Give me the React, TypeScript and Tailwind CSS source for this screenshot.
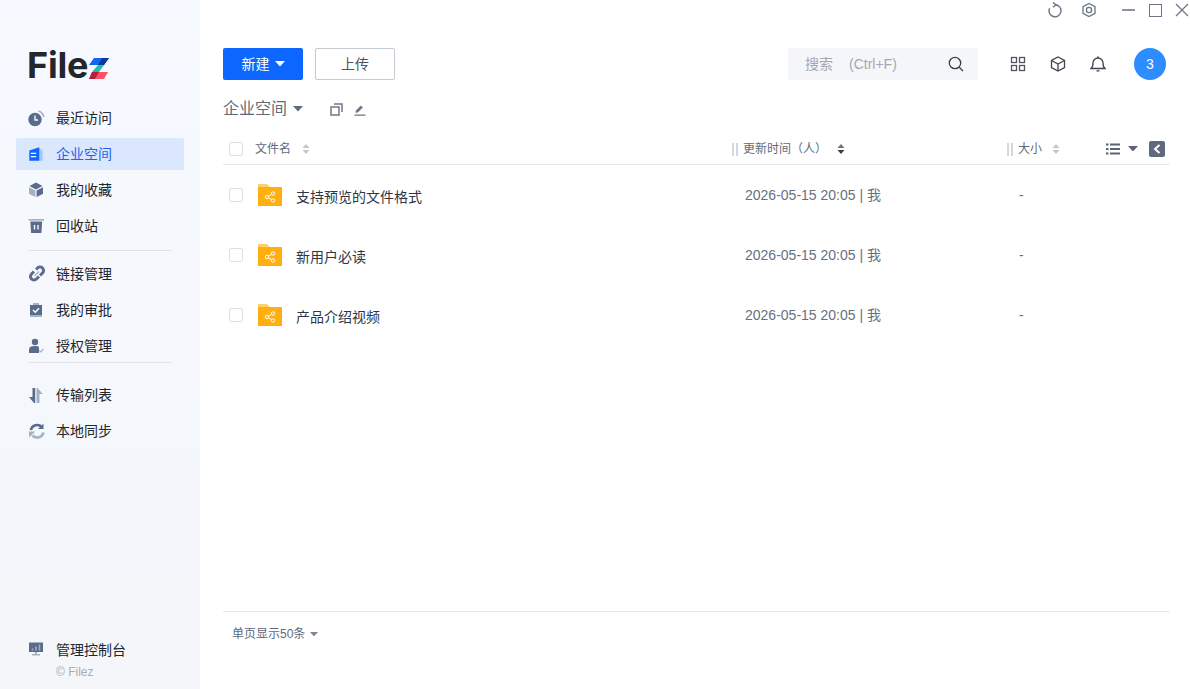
import type { ReactNode } from 'react';

const FONT = "font-['Liberation_Sans','Noto_Sans_CJK_SC',sans-serif]";

function Logo() {
  return (
    <div className="flex items-end h-[30px] pl-[27px]">
      <span className="font-['Inter',sans-serif] font-bold text-[36px] leading-[30px] tracking-[-0.2px] text-[#23262b]">File</span>
      <svg width="20" height="21" viewBox="0 0 20 21" className="ml-[1px] mb-[1px]">
        <polygon points="5,0 20,0 15,7 0,7" fill="#1166f5" />
        <polygon points="13,0 20,0 15,7 9,7" fill="#0d3a9a" />
        <polygon points="9,7 15,7 10,14 3,14" fill="#22bfa6" />
        <polygon points="3,14 19,14 15,21 0,21" fill="#ff5263" />
        <polygon points="3,14 10,14 6,21 0,21" fill="#b5203f" />
      </svg>
    </div>
  );
}

const dark = '#5a6c8c';
const light = '#a3b1c4';

const navIcons: Record<string, ReactNode> = {
  recent: (
    <svg width="18" height="18" viewBox="0 0 18 18">
      <circle cx="7" cy="10.500" r="6.700" fill={dark} />
      <path d="M7 6.500v4.500h3" fill="none" stroke="#fff" strokeWidth="1.300" />
      <path d="M10.500 2a7.500 7.500 0 0 1 5.300 6" fill="none" stroke={light} strokeWidth="1.600" />
    </svg>
  ),
  space: (
    <svg width="18" height="18" viewBox="0 0 18 18">
      <path d="M11.300 3.500l3.400 2v10.200h-3.400z" fill="#a9c6fa" />
      <path d="M1.300 5.500l10-3.200v13.400h-10z" fill="#0d66ff" />
      <path d="M2.800 8.300h5.400M2.800 11.700h5.400" stroke="#fff" strokeWidth="1.300" />
    </svg>
  ),
  fav: (
    <svg width="18" height="18" viewBox="0 0 18 18">
      <path d="M8 1.500l6.500 3.500L8 8.500 1.500 5z" fill={dark} />
      <path d="M1 6.200l6.400 3.400V16L1 12.800z" fill={light} />
      <path d="M15 6.200L8.600 9.600V16l6.400-3.200z" fill={dark} />
    </svg>
  ),
  trash: (
    <svg width="18" height="18" viewBox="0 0 18 18">
      <path d="M.5 2h15.500v1.600H.5z" fill={light} />
      <path d="M2.300 4.500h11.900l-.8 11.500H3.100z" fill={dark} />
      <path d="M6.500 8v4.500M10 8v4.500" stroke="#fff" strokeWidth="1.300" />
    </svg>
  ),
  link: (
    <svg width="18" height="18" viewBox="0 0 18 18" fill="none" strokeWidth="3">
      <path d="M6 6.500L3.500 9a3.500 3.500 0 0 0 5 5l2.500-2.500" stroke={dark} />
      <path d="M8 4.500l1.500-1.500a3.500 3.500 0 0 1 5 5L12 10.500" stroke={dark} />
      <path d="M6.500 11L11 6.500" stroke={light} strokeWidth="1.500" />
    </svg>
  ),
  approve: (
    <svg width="18" height="18" viewBox="0 0 18 18">
      <path d="M5 2h6v2H5z" fill={light} />
      <path d="M2 4h12v10.500H2z" fill={dark} />
      <path d="M2 14.500h12V16H2z" fill={light} />
      <path d="M5 9l2.300 2.300 3.700-4" fill="none" stroke="#fff" strokeWidth="1.400" />
    </svg>
  ),
  auth: (
    <svg width="18" height="18" viewBox="0 0 18 18">
      <circle cx="7" cy="5" r="3.200" fill={dark} />
      <path d="M1 16v-3.500C1 10 3 9 7 9s4 .8 4 2.500V16z" fill={dark} />
      <path d="M11.300 13.500l1.500 1.500 2.700-3" fill="none" stroke={light} strokeWidth="1.200" />
    </svg>
  ),
  transfer: (
    <svg width="18" height="18" viewBox="0 0 18 18">
      <path d="M4.500 2h2.700v15H6L1 11h3.500z" fill={dark} />
      <path d="M8.500 2h1.200l5 6h-3.200v9H8.500z" fill={light} />
    </svg>
  ),
  sync: (
    <svg width="18" height="18" viewBox="0 0 18 18" fill="none" strokeWidth="2.600">
      <path d="M2.800 8a6.500 6.500 0 0 1 11-3" stroke={dark} />
      <path d="M15.500 1.500v5.500H10z" fill={dark} />
      <path d="M15.500 10.500a6.500 6.500 0 0 1-11 3" stroke={light} />
      <path d="M1 9.500h6.300L1 15.500z" fill={light} />
    </svg>
  ),
  console: (
    <svg width="18" height="18" viewBox="0 0 18 18">
      <path d="M1 1.500h14V11H1z" fill={dark} />
      <path d="M4.500 7.500V9.500M8 5.500v4M11.500 3.500v6" stroke={light} strokeWidth="1.500" />
      <path d="M7 11h2v2H7zM4 13h8v1.500H4z" fill={light} />
    </svg>
  ),
};

function NavItem({ icon, label, active }: { icon: string; label: string; active?: boolean }) {
  return (
    <div className="h-[36px] flex items-center px-[16px]">
      <div className={`flex-1 h-[32px] pl-[12px] flex items-center rounded-[2px] ${active ? 'bg-[#dbe7fd]' : ''}`}>
        <span className="w-[18px] h-[18px] shrink-0">{navIcons[icon]}</span>
        <span className={`ml-[10px] text-[14px] ${active ? 'text-[#1a66f0]' : 'text-[#22262e]'}`}>{label}</span>
      </div>
    </div>
  );
}

function Sort({ dark: isDark }: { dark?: boolean }) {
  const c = isDark ? '#3a3f48' : '#c3c7cd';
  return (
    <svg width="8" height="10" viewBox="0 0 8 10" className="shrink-0">
      <path d="M4 0l3.500 4H.5z" fill={isDark ? '#6b7280' : c} />
      <path d="M4 10L.5 6h7z" fill={c} />
    </svg>
  );
}

function Caret({ w = 10, color = '#5f6a7a' }: { w?: number; color?: string }) {
  return (
    <svg width={w} height={w * 0.55} viewBox="0 0 10 5.500" className="shrink-0">
      <path d="M0 0h10L5 5.500z" fill={color} />
    </svg>
  );
}

function ColBar() {
  return (
    <span className="flex gap-[2px] w-[6px] h-[13px] shrink-0 mt-[1px]">
      <span className="w-[2px] h-full bg-[#dcd6d8]" />
      <span className="w-[2px] h-full bg-[#d5d7e0]" />
    </span>
  );
}

function Folder() {
  return (
    <svg width="24" height="22" viewBox="0 0 24 22" className="shrink-0">
      <path d="M0 0h9l3 3H0z" fill="#ffd168" />
      <path d="M0 3h24v19H0z" fill="#ffaf0f" />
      <g stroke="#fff" fill="none" strokeWidth="1">
        <circle cx="9" cy="13" r="1.700" />
        <circle cx="15" cy="9.500" r="1.700" />
        <circle cx="15" cy="16.500" r="1.700" />
        <path d="M10.500 12.200l3-1.800M10.500 13.800l3 1.800" />
      </g>
    </svg>
  );
}

const files = ['支持预览的文件格式', '新用户必读', '产品介绍视频'];

export default function App() {
  return (
    <div className={`${FONT} flex h-screen w-[1190px] overflow-hidden bg-white`}>
      {/* Sidebar */}
      <aside className="w-[200px] shrink-0 flex flex-col justify-between bg-gradient-to-b from-[#f6f9ff] to-[#f4f6fa]">
        <div>
          <div className="pt-[50px] mb-[20px]">
            <Logo />
          </div>
          <NavItem icon="recent" label="最近访问" />
          <NavItem icon="space" label="企业空间" active />
          <NavItem icon="fav" label="我的收藏" />
          <NavItem icon="trash" label="回收站" />
          <div className="mx-[28px] mt-[6px] mb-[5px] h-px bg-[#e0e3ea]" />
          <NavItem icon="link" label="链接管理" />
          <NavItem icon="approve" label="我的审批" />
          <NavItem icon="auth" label="授权管理" />
          <div className="mx-[28px] mt-[-2px] mb-[14px] h-px bg-[#e0e3ea]" />
          <NavItem icon="transfer" label="传输列表" />
          <NavItem icon="sync" label="本地同步" />
        </div>
        <div className="pb-[9px]">
          <NavItem icon="console" label="管理控制台" />
          <div className="pl-[56px] -mt-[4px] text-[12px] leading-[16px] text-[#a9adb5]">© Filez</div>
        </div>
      </aside>

      {/* Main */}
      <main className="flex-1 flex flex-col min-w-0">
        {/* Window controls */}
        <div className="h-[20px] flex items-center justify-end">
          <svg width="16" height="16" viewBox="0 0 16 16" fill="none" stroke="#6a7585" strokeWidth="1.400">
            <path d="M8 2.800a6 6 0 1 1-5.400 3.400" />
            <path d="M6 .4l3 2.400-3 2.400" />
          </svg>
          <svg width="16" height="16" viewBox="0 0 16 16" fill="none" stroke="#6a7585" strokeWidth="1.300" className="ml-[18px]">
            <path d="M8 1.500l6 3.200v6.600l-6 3.200-6-3.200V4.700z" />
            <circle cx="8" cy="8" r="2.600" />
          </svg>
          <span className="ml-[25px] w-[13px] h-[2px] bg-[#8a94a3]" />
          <span className="ml-[14px] w-[13px] h-[13px] border-[1.500px] border-[#6a7585]" />
          <svg width="14" height="14" viewBox="0 0 14 14" fill="none" stroke="#6a7585" strokeWidth="1.200" className="ml-[13px] mr-[1px]">
            <path d="M1 1l12 12M13 1L1 13" />
          </svg>
        </div>

        <div className="flex-1 flex flex-col pl-[23px] pr-[20px] min-h-0">
          {/* Toolbar */}
          <div className="mt-[28px] h-[32px] flex items-center">
            <button className="w-[80px] h-[32px] rounded-[2px] bg-[#0d66ff] text-white text-[14px] flex items-center justify-center gap-[5px]">
              新建
              <Caret color="#fff" />
            </button>
            <button className="ml-[12px] w-[80px] h-[32px] rounded-[2px] border border-[#c5c9d0] text-[#4a5362] text-[14px]">上传</button>
            <div className="ml-auto w-[190px] h-[32px] bg-[#f5f6fa] rounded-[2px] flex items-center pl-[17px] pr-[14px] text-[14px] text-[#a2a8b3]">
              <span>搜索</span>
              <span className="ml-[16px]">(Ctrl+F)</span>
              <svg width="16" height="16" viewBox="0 0 16 16" fill="none" stroke="#3a3f48" strokeWidth="1.300" className="ml-auto">
                <circle cx="7" cy="7" r="5.700" />
                <path d="M11.200 11.200L15 15" />
              </svg>
            </div>
            <svg width="16" height="16" viewBox="0 0 16 16" fill="none" stroke="#4e5560" strokeWidth="1.300" className="ml-[32px]">
              <rect x="1.500" y="1.500" width="5" height="5" />
              <rect x="9.500" y="1.500" width="5" height="5" />
              <rect x="1.500" y="9.500" width="5" height="5" />
              <rect x="9.500" y="9.500" width="5" height="5" />
            </svg>
            <svg width="16" height="16" viewBox="0 0 16 16" fill="none" stroke="#3f4650" strokeWidth="1.300" className="ml-[24px]">
              <path d="M8 1l6.500 3.500v7L8 15l-6.500-3.500v-7z" />
              <path d="M1.500 4.500L8 8l6.500-3.500M8 8v7" />
            </svg>
            <svg width="16" height="16" viewBox="0 0 16 16" fill="none" stroke="#3f4650" strokeWidth="1.300" className="ml-[24px]">
              <path d="M1 12.500C3 11 3 9 3 7a5 5 0 0 1 10 0c0 2 0 4 2 5.500z" />
              <path d="M8 .3v1.700M6.500 14.800h3" />
            </svg>
            <div className="ml-[28px] mr-[4px] w-[32px] h-[32px] rounded-full bg-[#2d8cff] text-white text-[14px] flex items-center justify-center">3</div>
          </div>

          {/* Breadcrumb */}
          <div className="mt-[17px] h-[24px] flex items-center text-[16px] text-[#5f6a7a]">
            <span>企业空间</span>
            <span className="ml-[6px]"><Caret /></span>
            <svg width="13" height="13" viewBox="0 0 13 13" fill="none" stroke="#6f7886" strokeWidth="1.500" className="ml-[27px]">
              <rect x="1" y="4" width="8" height="8" />
              <path d="M4 1h8v8" />
            </svg>
            <svg width="13" height="13" viewBox="0 0 13 13" className="ml-[11px]">
              <path d="M0.500 11.500h11v1.300H.5z" fill="#6f7886" />
              <path d="M1.500 9.800l.4-2.300 5-5 2 2-5 5z" fill="#6f7886" />
            </svg>
          </div>

          {/* Table header */}
          <div className="mt-[12px] h-[32px] flex items-center border-b border-[#e8e9ec] text-[12px] text-[#5f6a7a]">
            <span className="ml-[6px] w-[14px] h-[14px] border border-[#dcdfe6] rounded-[2px] shrink-0" />
            <span className="ml-[12px] w-[47px]">文件名</span>
            <Sort />
            <span className="ml-[422px]"><ColBar /></span>
            <span className="ml-[5px] w-[95px]">更新时间（人）</span>
            <span className="-ml-[1px]"><Sort dark /></span>
            <span className="ml-[162px]"><ColBar /></span>
            <span className="ml-[5px] w-[34px]">大小</span>
            <Sort />
            <svg width="14" height="14" viewBox="0 0 14 14" fill="#5a6474" className="ml-[46px]">
              <path d="M0 1.500h2.500v2H0zM4 1.500h10v2H4zM0 6h2.500v2H0zM4 6h10v2H4zM0 10.500h2.500v2H0zM4 10.500h10v2H4z" />
            </svg>
            <span className="ml-[8px]"><Caret color="#5a6474" /></span>
            <span className="ml-[11px] mr-[5px] w-[16px] h-[16px] rounded-[2px] bg-[#5f6b7c] flex items-center justify-center">
              <svg width="8" height="10" viewBox="0 0 8 10" fill="none" stroke="#fff" strokeWidth="2">
                <path d="M6.500 1L2 5l4.500 4" />
              </svg>
            </span>
          </div>

          {/* Rows */}
          <div className="flex-1">
            {files.map((name) => (
              <div key={name} className="h-[60px] flex items-center text-[14px]">
                <span className="ml-[6px] w-[14px] h-[14px] border border-[#dcdfe6] rounded-[2px] shrink-0" />
                <span className="ml-[15px]"><Folder /></span>
                <span className="ml-[14px] w-[449px] text-[#2f3542] mt-[4px]">{name}</span>
                <span className="w-[275px] text-[#68707d]">2026-05-15 20:05 | 我</span>
                <span className="text-[#68707d] -ml-[1px] mt-[1px]">-</span>
              </div>
            ))}
          </div>

          {/* Footer */}
          <div className="h-[78px] border-t border-[#e8e9ec] pt-[14px] pl-[9px] flex items-start text-[12px] text-[#5f6a7a]">
            <span className="leading-[16px]">单页显示50条</span>
            <span className="ml-[5px] mt-[6px]"><Caret w={8} color="#7d8593" /></span>
          </div>
        </div>
      </main>
    </div>
  );
}
